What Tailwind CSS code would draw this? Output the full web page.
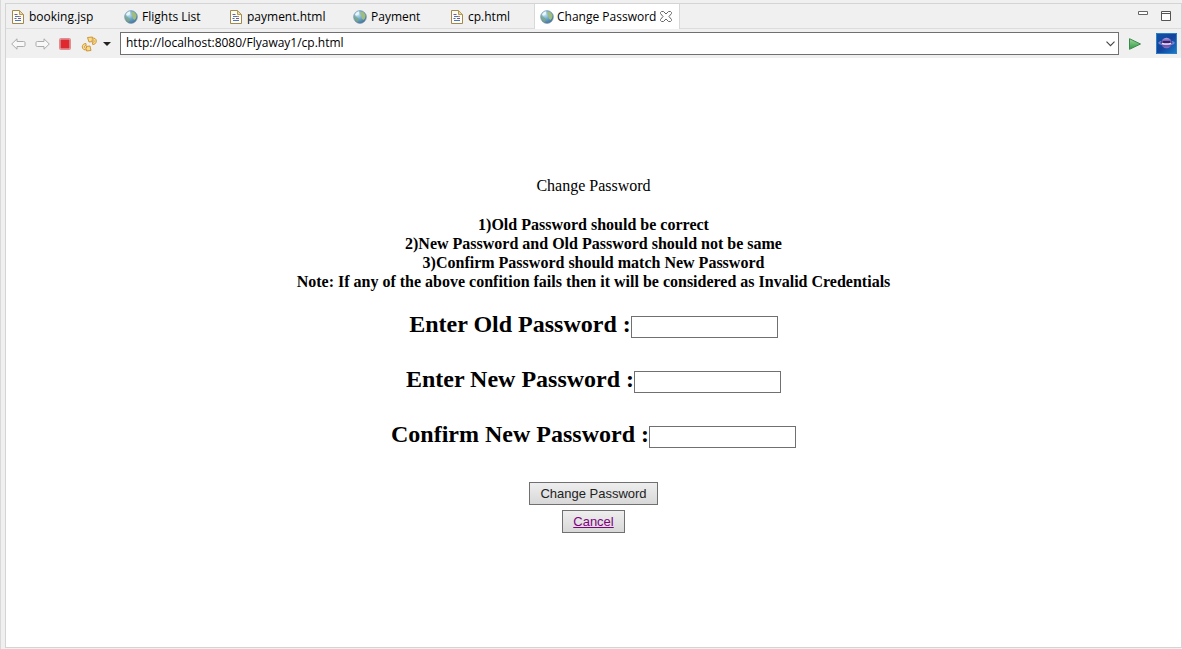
<!DOCTYPE html>
<html lang="en">
<head>
<meta charset="utf-8">
<meta name="viewport" content="width=device-width, initial-scale=1">
<title>Change Password</title>
<script src="https://cdn.jsdelivr.net/npm/@tailwindcss/browser@4"></script>
</head>
<body class="flex min-h-screen flex-col border-l border-[#d9d9d9] bg-[#f0f0f0] pt-[3px] pb-px pl-1 font-['Open_Sans',sans-serif] text-xs text-black">
<svg class="absolute size-0" aria-hidden="true">
  <defs>
    <radialGradient id="sea" cx="0.35" cy="0.3" r="0.8"><stop offset="0" stop-color="#c8e6f4"/><stop offset="0.5" stop-color="#66a3c9"/><stop offset="1" stop-color="#3f6890"/></radialGradient>
    <linearGradient id="go" x1="0" y1="0" x2="0" y2="1"><stop offset="0" stop-color="#a0d69a"/><stop offset="1" stop-color="#2d9a45"/></linearGradient>
    <linearGradient id="night" x1="0" y1="0" x2="1" y2="1"><stop offset="0" stop-color="#0d55a6"/><stop offset="0.5" stop-color="#15429c"/><stop offset="1" stop-color="#1a80cc"/></linearGradient>
    <linearGradient id="orb" x1="0" y1="0" x2="0" y2="1"><stop offset="0" stop-color="#b5a8e8"/><stop offset="0.5" stop-color="#4b2f86"/><stop offset="1" stop-color="#8d78c8"/></linearGradient>
    <symbol id="page" viewBox="0 0 12 14">
      <path d="M.5.5h7l4 4v9H.5z" fill="#fdfcf3" stroke="#a08850"/>
      <path d="M7.5.5v4h4z" fill="#ead9a8" stroke="#b99a55"/>
      <path d="M2.500 4.500h3M2.500 8.500h2M6 8.500h3" stroke="#6b5b9a"/>
      <path d="M3 6.500h5M3 10.500h6" stroke="#4777bd"/>
      <path d="M7 6.500h2" stroke="#c27a86"/>
    </symbol>
    <symbol id="globe" viewBox="0 0 14 14">
      <circle cx="7" cy="7" r="6.400" fill="url(#sea)" stroke="#7893a5" stroke-width=".6"/>
      <path d="M7.500 2.500 9 1.500l2 1.300 1.600 2.700-.7 3-1.700 1.500-1.800-2 .4-2-1.500-1.500z" fill="#9fbd7c"/>
      <path d="M1 6 3.500 7 5.800 8.500l-.2 2.500-1.500 1.200L1.500 9z" fill="#7fa77f" opacity=".8"/>
      <path d="M2 5c.5-2 2-3.200 4.200-3.700l-.3 3-2 1.500z" fill="#e8f6fa"/>
    </symbol>
  </defs>
</svg>

<div class="flex flex-1 flex-col border border-[#d4d4d4]">
  <header>
    <div class="flex h-[25px] border-b border-[#dcdcdc]">
      <nav class="flex pt-px" aria-label="Open editors">
        <button class="flex w-28 items-center gap-[5px] pl-1.5 whitespace-nowrap"><svg class="h-3.5 w-3 shrink-0"><use href="#page"/></svg>booking.jsp</button>
        <button class="flex w-[106px] items-center gap-1 pl-1.5 whitespace-nowrap"><svg class="size-3.5 shrink-0"><use href="#globe"/></svg>Flights List</button>
        <button class="flex w-[123px] items-center gap-[5px] pl-1.5 whitespace-nowrap"><svg class="h-3.5 w-3 shrink-0"><use href="#page"/></svg>payment.html</button>
        <button class="flex w-[98px] items-center gap-1 pl-1.5 whitespace-nowrap"><svg class="size-3.5 shrink-0"><use href="#globe"/></svg>Payment</button>
        <button class="flex w-[89px] items-center gap-[5px] pl-1.5 whitespace-nowrap"><svg class="h-3.5 w-3 shrink-0"><use href="#page"/></svg>cp.html</button>
        <div class="-mt-px -mb-px flex w-[146px] items-center justify-between border-x border-[#d8d8d8] bg-white pr-[7px] pl-[5px]">
          <button class="flex items-center gap-[3px] whitespace-nowrap"><svg class="size-3.5 shrink-0"><use href="#globe"/></svg>Change Password</button>
          <button aria-label="Close tab"><svg class="block h-[11px] w-3" viewBox="0 0 12 11" fill="none" stroke="#666"><path d="M1.500.5h2L6 3 8.500.5h2l1 1v1L9 5.500l2.500 3v1l-1 1h-2L6 8l-2.500 2.500h-2l-1-1v-1L3 5.500.5 2.500v-1z"/></svg></button>
        </div>
      </nav>
      <div class="ml-auto flex items-start gap-[13px] pt-[7px] pr-2.5">
        <button aria-label="Minimize"><svg class="block h-[5px] w-2.5" viewBox="0 0 10 5"><path d="M.5.5h9v3h-9z" fill="#fff" stroke="#666"/></svg></button>
        <button aria-label="Maximize"><svg class="block h-2.5 w-2.5" viewBox="0 0 10 10"><path d="M.5.5h9v9h-9zM.5 2.500h9" fill="#fff" stroke="#555"/></svg></button>
      </div>
    </div>

    <div class="flex h-[29px] items-center pr-1 pl-[5px]">
      <button aria-label="Back"><svg class="block h-3 w-[15px]" viewBox="0 0 15 12"><path d="M.7 6 6 .8v2.700h6.500q1.500 0 1.500 1v3q0 1-1.500 1H6v2.700z" fill="#f8f8f8" stroke="#aaa"/></svg></button>
      <button class="ml-[9px]" aria-label="Forward"><svg class="block h-3 w-[15px]" viewBox="0 0 15 12"><path d="M14.300 6 9 .8v2.700H2.500q-1.500 0-1.500 1v3q0 1 1.500 1H9v2.700z" fill="#f8f8f8" stroke="#aaa"/></svg></button>
      <button class="ml-[9px]" aria-label="Stop"><svg class="block size-3" viewBox="0 0 12 12"><rect x=".5" y=".5" width="11" height="11" rx="1" fill="#f6b9bb" stroke="#df8d91"/><rect x="2" y="2" width="8" height="8" fill="#e3262e" stroke="#c8323a"/></svg></button>
      <button class="ml-2.5" aria-label="Refresh"><svg class="block h-4 w-[17px]" viewBox="0 0 17 16" fill="#f9dc8a" stroke="#c98d2c" stroke-width=".9" stroke-linejoin="round"><path d="M6.500 1.500 11.500 1 11 2.300C13.500 1.500 15.500 3 15.300 5.200c-.1 2-1.600 3.400-3.600 3.300l-.3-2c1 .1 1.700-.5 1.700-1.400 0-1-.9-1.500-2.200-1.200l.6 1.600L8 6z"/><path d="M10 14.500 5.500 15l.3-1.300C3.300 14.500 1.200 13 1.300 10.800c.1-2 1.600-3.400 3.600-3.300l.3 2c-1-.1-1.700.5-1.700 1.400 0 1 .9 1.500 2.200 1.200L5.200 10.500 9 10z"/></svg></button>
      <button class="ml-[5px]" aria-label="Refresh options"><svg class="block h-1 w-2" viewBox="0 0 8 4"><path d="M0 0h8L4 4z" fill="#222"/></svg></button>
      <div class="relative ml-[9px] flex-1">
        <input class="block h-[23px] w-full border border-[#707070] bg-white pr-5 pb-0.5 pl-[5px] outline-none" type="text" aria-label="Address" value="http://localhost:8080/Flyaway1/cp.html">
        <button class="absolute top-[9px] right-1" aria-label="Show history"><svg class="block h-1.5 w-[9px]" viewBox="0 0 9 6"><path d="m.5.7 4 4 4-4" fill="none" stroke="#444" stroke-width="1.100"/></svg></button>
      </div>
      <button class="ml-2.5" aria-label="Go"><svg class="block h-3 w-3" viewBox="0 0 12 12"><path d="M.5.700 11.500 6 .5 11.300z" fill="url(#go)" stroke="#39894a"/></svg></button>
      <button class="ml-[15px]" aria-label="Open in external browser"><svg class="block size-[21px]" viewBox="0 0 21 21"><path d="M0 0h21v21H0z" fill="url(#night)"/><path d="M.5.5h20v20H.5z" fill="none" stroke="#2c80c8"/><circle cx="10.500" cy="10" r="5.300" fill="url(#orb)"/><path d="M7 8h7v3.500H7z" fill="#3a1f6c"/><path d="M5 8.800C2.500 9.300 2 10 3.500 10.700c3 1.300 11 1.300 14 0 1.500-.7 1-1.400-1.500-1.900" fill="none" stroke="#a89be4"/><path d="M6 10.300q4.500 1.300 9 0" fill="none" stroke="#f0e8ff" stroke-width="1.400"/></svg></button>
    </div>
  </header>

  <main class="flex-1 bg-white pt-[118px] pb-8 text-center font-['Liberation_Serif',serif] text-base leading-[19px]">
    <h1>Change Password</h1>
    <div class="mt-5 font-bold">
      <p>1)Old Password should be correct</p>
      <p>2)New Password and Old Password should not be same</p>
      <p>3)Confirm Password should match New Password</p>
      <p>Note: If any of the above confition fails then it will be considered as Invalid Credentials</p>
    </div>
    <form class="mt-[19px] flex flex-col items-center">
      <div class="flex flex-col items-center gap-[27px] text-2xl leading-7 font-bold">
        <div class="flex items-end"><label for="old">Enter Old Password :</label><input class="h-[22px] w-[147px] border border-[#707070] bg-white px-0.5 text-sm font-normal outline-none" type="password" id="old"></div>
        <div class="flex items-end"><label for="new">Enter New Password :</label><input class="h-[22px] w-[147px] border border-[#707070] bg-white px-0.5 text-sm font-normal outline-none" type="password" id="new"></div>
        <div class="flex items-end"><label for="confirm">Confirm New Password :</label><input class="h-[22px] w-[147px] border border-[#707070] bg-white px-0.5 text-sm font-normal outline-none" type="password" id="confirm"></div>
      </div>
      <button type="submit" class="mt-[34px] h-[23px] border border-[#707070] bg-linear-to-b from-[#eeeeee] to-[#d8d8d8] px-2.5 font-['Liberation_Sans',sans-serif] text-[13px] leading-[21px] text-[#222]">Change Password</button>
      <a href="#" class="mt-[5px] h-[23px] border border-[#707070] bg-linear-to-b from-[#eeeeee] to-[#d8d8d8] px-2.5 font-['Liberation_Sans',sans-serif] text-[13px] leading-[21px] text-[#800080] underline">Cancel</a>
    </form>
  </main>
</div>
</body>
</html>
